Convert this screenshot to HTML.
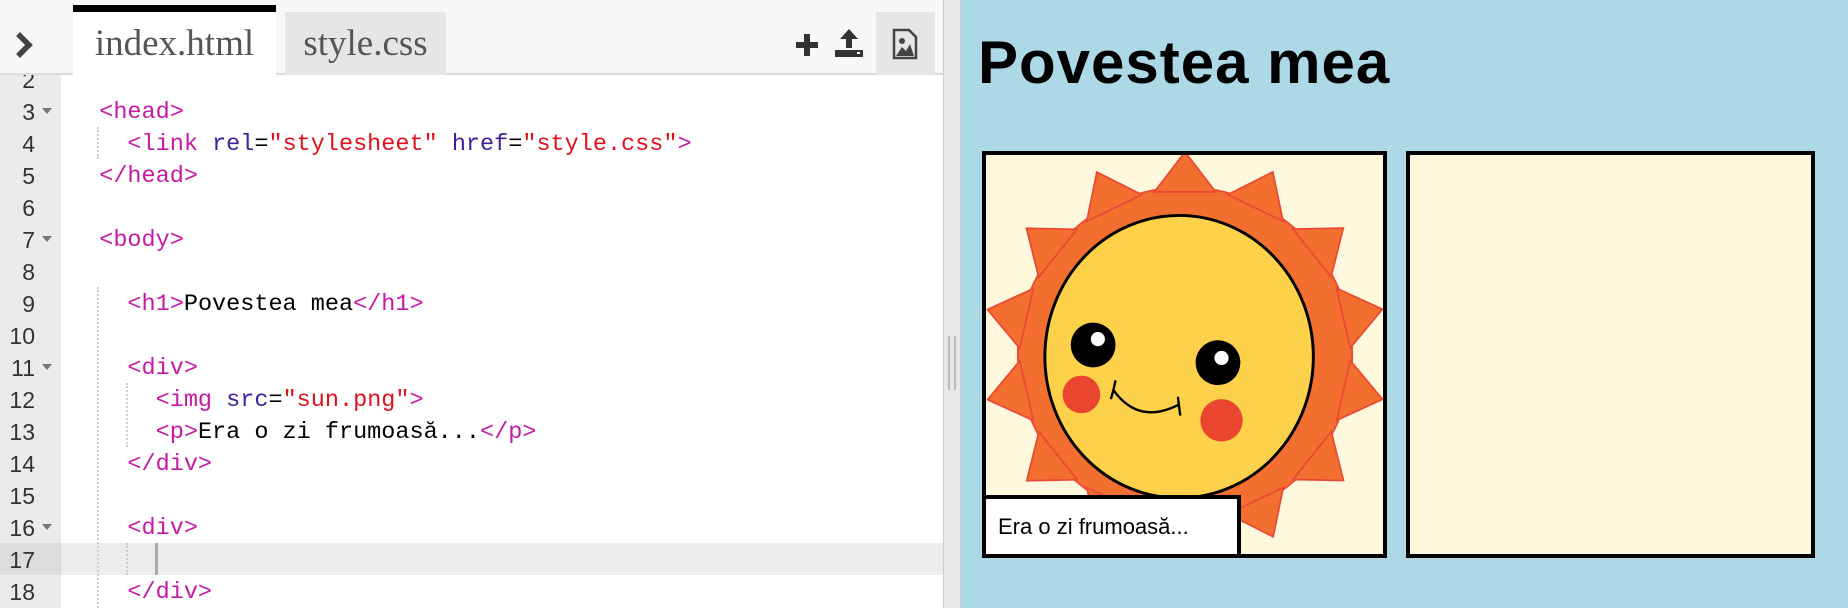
<!DOCTYPE html>
<html><head><meta charset="utf-8"><style>
*{margin:0;padding:0;box-sizing:border-box}
body{width:1848px;height:608px;overflow:hidden;position:relative;background:#fff;font-family:"Liberation Sans",sans-serif}
#editor{position:absolute;left:0;top:0;width:943px;height:608px;background:#fff}
#topbar{position:absolute;left:0;top:0;width:943px;height:75px;background:#f7f7f7;border-bottom:2px solid #ddd;z-index:2}
.tab{position:absolute;font-family:"Liberation Serif",serif;font-size:37px;color:#555;text-align:center}
#t1{left:73px;top:5px;width:203px;height:72px;background:#fff;border-top:7px solid #000;line-height:64px}
#t2{left:285px;top:12px;width:161px;height:63px;background:#e6e6e6;line-height:63px}
#gutter{position:absolute;left:0;top:63px;width:61px;height:545px;background:#ebebeb}
.ln{position:absolute;left:0;width:35px;text-align:right;font-family:"Liberation Sans",sans-serif;font-size:23px;color:#333;height:32px;line-height:34px}
.fold{position:absolute;left:42px;width:0;height:0;border-left:5px solid transparent;border-right:5px solid transparent;border-top:6px solid #777}
.cl{position:absolute;left:71px;font-family:"Liberation Mono",monospace;font-size:23.5px;height:32px;line-height:35px;white-space:pre;color:#000}
.t{color:#c41aa2}.a{color:#40209a}.s{color:#e01020}
.g{position:absolute;width:0;border-left:2px dotted #ccc}
#divider{position:absolute;left:943px;top:0;width:18px;height:608px;background:#e8e8e8;border-left:1px solid #ccc;border-right:1px solid #ccc}
#preview{position:absolute;left:961px;top:0;width:887px;height:608px;background:#add8e6}
h1{position:absolute;left:978px;top:28px;font-family:"Liberation Sans",sans-serif;font-weight:bold;font-size:60px;color:#000;letter-spacing:1px}
.panel{position:absolute;top:151px;height:407px;border:4px solid #000;background:#fff8dc;overflow:hidden}
#cap{position:absolute;left:982px;top:495px;width:259px;height:63px;background:#fff;border:4px solid #000;font-size:22px;line-height:55px;padding-left:12px;color:#000}
</style></head><body>
<div id="editor">
<div id="topbar">
<svg style="position:absolute;left:13px;top:31px" width="22" height="28" viewBox="0 0 22 28"><path d="M5 3 L16 14 L5 25" fill="none" stroke="#444" stroke-width="5.5"/></svg>
<div class="tab" id="t1">index.html</div>
<div class="tab" id="t2">style.css</div>
<svg style="position:absolute;left:794px;top:32px" width="26" height="26" viewBox="0 0 26 26"><path d="M13 2V24M2 13H24" stroke="#333" stroke-width="6"/></svg>
<svg style="position:absolute;left:834px;top:28px" width="30" height="30" viewBox="0 0 30 30"><path d="M15 1 L24 11 H18 V20 H12 V11 H6 Z" fill="#333"/><rect x="1" y="22" width="28" height="7" fill="#333"/><rect x="23" y="24" width="3" height="2" fill="#fff"/></svg>
<div style="position:absolute;left:876px;top:12px;width:59px;height:63px;background:#e6e6e6"></div>
<svg style="position:absolute;left:892px;top:28px" width="26" height="32" viewBox="0 0 26 32"><path d="M2 2H17L24 9V30H2Z" fill="none" stroke="#444" stroke-width="2.5"/><circle cx="10" cy="13" r="3" fill="#444"/><path d="M4 28L10 19L14 23L18 16L22 28Z" fill="#444"/></svg>
</div>
<div id="gutter"></div>
<div style="position:absolute;left:61px;top:543px;width:882px;height:32px;background:#ececec"></div>
<div style="position:absolute;left:0;top:543px;width:61px;height:32px;background:#dcdcdc"></div>
<div class="ln" style="top:63px">2</div>
<div class="ln" style="top:95px">3</div><div class="fold" style="top:108px"></div>
<div class="ln" style="top:127px">4</div>
<div class="ln" style="top:159px">5</div>
<div class="ln" style="top:191px">6</div>
<div class="ln" style="top:223px">7</div><div class="fold" style="top:236px"></div>
<div class="ln" style="top:255px">8</div>
<div class="ln" style="top:287px">9</div>
<div class="ln" style="top:319px">10</div>
<div class="ln" style="top:351px">11</div><div class="fold" style="top:364px"></div>
<div class="ln" style="top:383px">12</div>
<div class="ln" style="top:415px">13</div>
<div class="ln" style="top:447px">14</div>
<div class="ln" style="top:479px">15</div>
<div class="ln" style="top:511px">16</div><div class="fold" style="top:524px"></div>
<div class="ln" style="top:543px">17</div>
<div class="ln" style="top:575px">18</div>
<div class="g" style="left:97px;top:127px;height:32px"></div>
<div class="g" style="left:97px;top:287px;height:321px"></div>
<div class="g" style="left:126px;top:383px;height:64px"></div>
<div class="g" style="left:126px;top:543px;height:32px"></div>
<div class="cl" style="top:95px">  <span class="t">&lt;head&gt;</span></div>
<div class="cl" style="top:127px">    <span class="t">&lt;link</span> <span class="a">rel</span>=<span class="s">"stylesheet"</span> <span class="a">href</span>=<span class="s">"style.css"</span><span class="t">&gt;</span></div>
<div class="cl" style="top:159px">  <span class="t">&lt;/head&gt;</span></div>
<div class="cl" style="top:223px">  <span class="t">&lt;body&gt;</span></div>
<div class="cl" style="top:287px">    <span class="t">&lt;h1&gt;</span>Povestea mea<span class="t">&lt;/h1&gt;</span></div>
<div class="cl" style="top:351px">    <span class="t">&lt;div&gt;</span></div>
<div class="cl" style="top:383px">      <span class="t">&lt;img</span> <span class="a">src</span>=<span class="s">"sun.png"</span><span class="t">&gt;</span></div>
<div class="cl" style="top:415px">      <span class="t">&lt;p&gt;</span>Era o zi frumoasă...<span class="t">&lt;/p&gt;</span></div>
<div class="cl" style="top:447px">    <span class="t">&lt;/div&gt;</span></div>
<div class="cl" style="top:511px">    <span class="t">&lt;div&gt;</span></div>
<div style="position:absolute;left:155px;top:543px;width:3px;height:32px;background:#aaa"></div>
<div class="cl" style="top:575px">    <span class="t">&lt;/div&gt;</span></div>
</div>
<div id="divider"><div style="position:absolute;left:4px;top:336px;width:8px;height:54px;border-left:2px solid #bbb;border-right:2px solid #bbb"></div></div>
<div id="preview"></div>
<h1>Povestea mea</h1>
<div class="panel" style="left:982px;width:405px">
<svg style="position:absolute;left:0;top:0" width="398" height="400" viewBox="836 131 338 339">
<g transform="translate(1005,300)" fill="#f26f2f" stroke="#ea4a35" stroke-width="1.5">
<circle r="142"/>
<g id="sp"><polygon points="-26,-138 0,-172 26,-138"/></g>
<use href="#sp" transform="rotate(25.7)"/><use href="#sp" transform="rotate(51.4)"/><use href="#sp" transform="rotate(77.1)"/><use href="#sp" transform="rotate(102.8)"/><use href="#sp" transform="rotate(128.5)"/><use href="#sp" transform="rotate(154.2)"/><use href="#sp" transform="rotate(180)"/><use href="#sp" transform="rotate(205.7)"/><use href="#sp" transform="rotate(231.4)"/><use href="#sp" transform="rotate(257.1)"/><use href="#sp" transform="rotate(282.8)"/><use href="#sp" transform="rotate(308.5)"/><use href="#sp" transform="rotate(334.2)"/>
</g>
<ellipse cx="1000" cy="302" rx="114" ry="120" fill="#fdd14a" stroke="#000" stroke-width="2.5"/>
<circle cx="927" cy="292" r="19" fill="#000"/><circle cx="931" cy="287" r="6" fill="#fff"/>
<circle cx="1033" cy="307" r="19" fill="#000"/><circle cx="1036" cy="303" r="6" fill="#fff"/>
<circle cx="917" cy="334" r="16" fill="#e9452f"/>
<circle cx="1036" cy="356" r="18" fill="#e9452f"/>
<path d="M946 322 Q944 332 942 338 M944 330 Q965 360 999 343 M999 336 Q1000 345 1001 352" fill="none" stroke="#000" stroke-width="2"/>
</svg>
</div>
<div class="panel" style="left:1406px;width:409px"></div>
<div id="cap">Era o zi frumoasă...</div>
</body></html>
